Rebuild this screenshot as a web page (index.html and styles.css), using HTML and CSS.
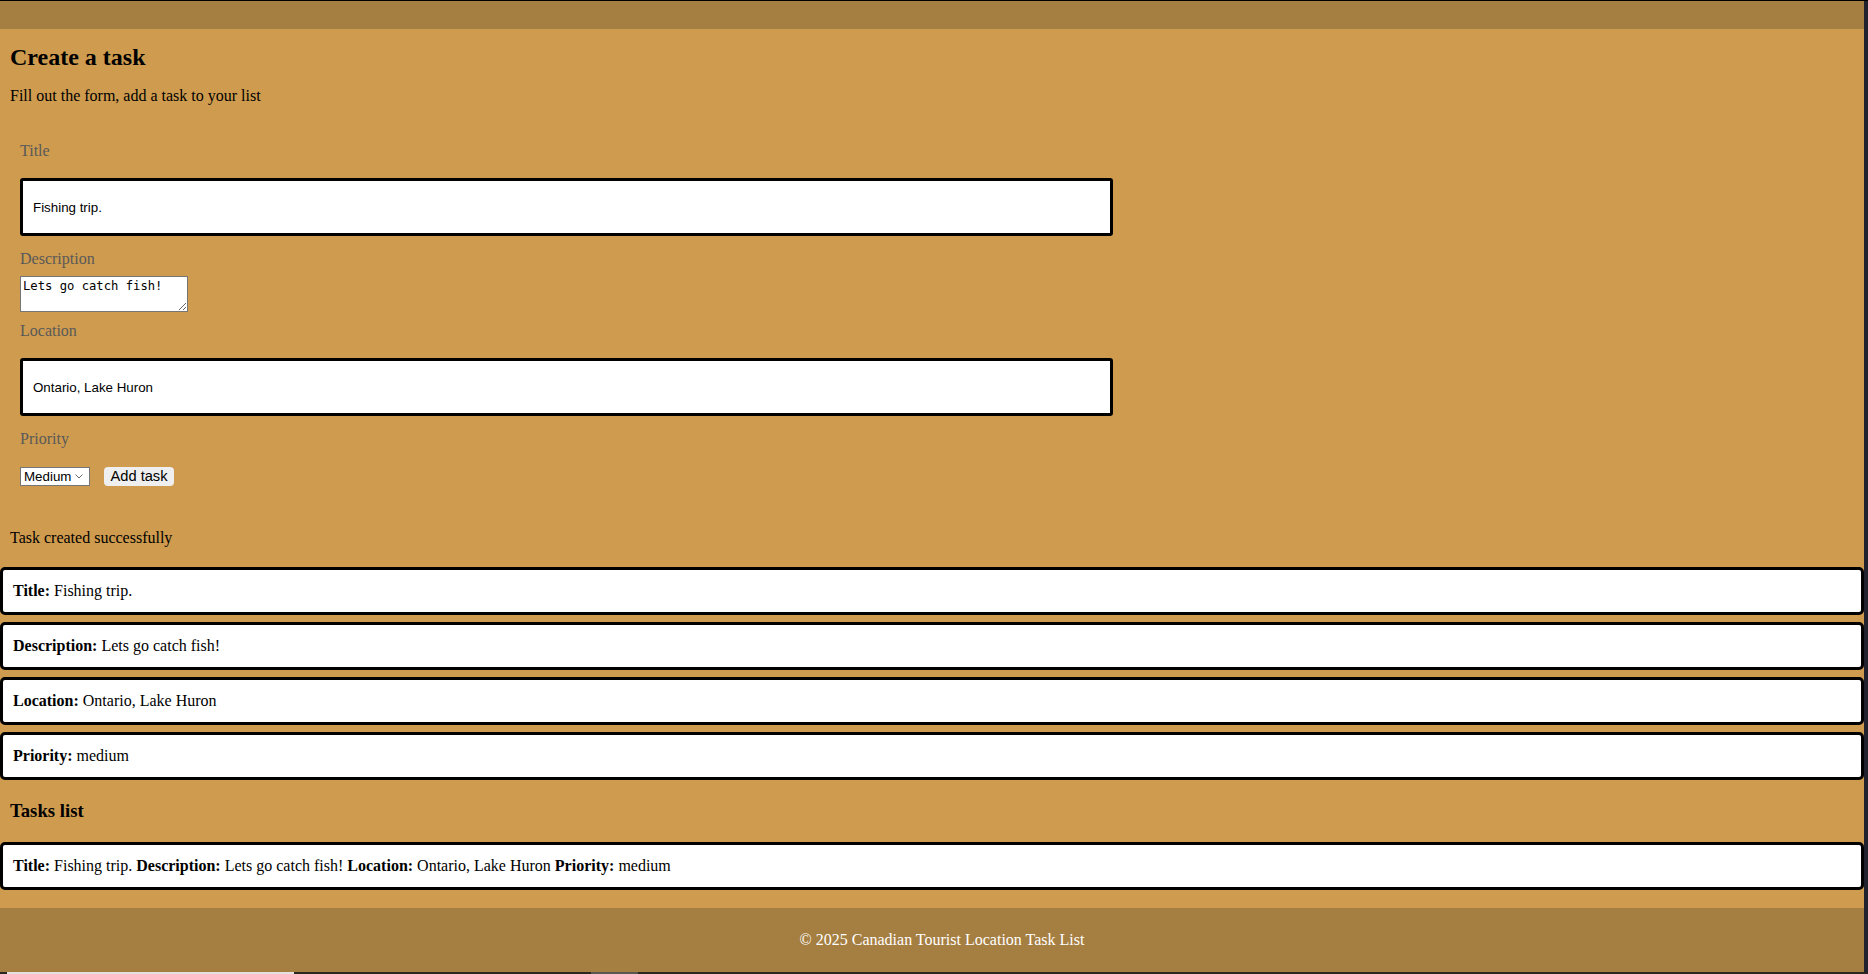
FILE: index.html
```html
<!DOCTYPE html>
<html lang="en">
<head>
<meta charset="utf-8">
<title>Canadian Tourist Location Task List</title>
<link rel="stylesheet" href="styles.css">
</head>
<body>
<div class="window">
  <div class="page">
    <header class="topbar"></header>
    <main class="main">
      <section class="create">
        <h2 class="create-title">Create a task</h2>
        <p class="intro">Fill out the form, add a task to your list</p>
        <form class="task-form">
          <label class="field-label" for="title">Title</label>
          <input class="text-input input-title" id="title" type="text" value="Fishing trip.">
          <label class="field-label label-desc" for="description">Description</label>
          <textarea class="desc-input" id="description">Lets go catch fish!</textarea>
          <label class="field-label label-loc" for="location">Location</label>
          <input class="text-input input-loc" id="location" type="text" value="Ontario, Lake Huron">
          <label class="field-label label-prio" for="priority">Priority</label>
          <div class="actions">
            <span class="select-wrap">
              <select class="prio-select" id="priority"><option>Medium</option><option>Low</option><option>High</option></select>
              <svg class="chevron" width="8" height="5" viewBox="0 0 8 5" aria-hidden="true"><path d="M0.5 0.5 L4 4 L7.5 0.5" fill="none" stroke="#6b6b6b" stroke-width="1"/></svg>
            </span>
            <button class="add-btn" type="button">Add task</button>
          </div>
        </form>
        <p class="status">Task created successfully</p>
      </section>
      <section class="details">
        <div class="box"><b>Title:</b> Fishing trip.</div>
        <div class="box"><b>Description:</b> Lets go catch fish!</div>
        <div class="box"><b>Location:</b> Ontario, Lake Huron</div>
        <div class="box"><b>Priority:</b> medium</div>
      </section>
      <h3 class="list-title">Tasks list</h3>
      <ul class="task-list">
        <li class="box"><b>Title:</b> Fishing trip. <b>Description:</b> Lets go catch fish! <b>Location:</b> Ontario, Lake Huron <b>Priority:</b> medium</li>
      </ul>
    </main>
    <footer class="footer">© 2025 Canadian Tourist Location Task List</footer>
  </div>
  <div class="frame-right"></div>
</div>
<div class="frame-bottom"><span class="bar-light"></span><span class="bar-gray"></span></div>
</body>
</html>
```

FILE: styles.css
```css
html, body {
  margin: 0;
  padding: 0;
  overflow: hidden;
}

body {
  border-top: 1px solid #000;
  font-family: "Liberation Serif", "Times New Roman", serif;
  font-size: 16px;
  line-height: 18px;
  color: #000;
  background: #cf9b4e;
}

.window {
  display: flex;
}

.page {
  flex: 1;
  display: flex;
  flex-direction: column;
  background: #cf9b4e;
  min-width: 0;
}

.frame-right {
  width: 4px;
  background: #20232e;
}

.frame-bottom {
  height: 2px;
  background: #2a2721;
  display: flex;
  align-items: stretch;
}

.bar-light {
  margin-left: 7px;
  width: 287px;
  background: #e2e2e2;
}

.bar-gray {
  margin-left: 297px;
  width: 47px;
  background: #5a5752;
}

.topbar {
  height: 28px;
  background: #a57e41;
}

.main {
  display: flex;
  flex-direction: column;
}

.create {
  padding: 0 10px;
}

.create-title {
  margin: 14px 0 0;
  font-size: 24px;
  line-height: 28px;
  font-weight: bold;
}

.intro {
  margin: 16px 0 0;
}

.task-form {
  margin-top: 37px;
  padding: 0 10px;
  display: flex;
  flex-direction: column;
  align-items: flex-start;
}

.field-label {
  color: #595959;
}

.label-desc,
.label-prio {
  margin-top: 14px;
}

.label-loc {
  margin-top: 10px;
}

.text-input {
  box-sizing: border-box;
  margin-top: 18px;
  width: 1093px;
  height: 58px;
  padding: 0 10px;
  border: 3px solid #000;
  border-radius: 3px;
  background: #fff;
  font-family: "Liberation Sans", Arial, sans-serif;
  font-size: 13.33px;
  color: #000;
  outline: none;
}

.desc-input {
  box-sizing: border-box;
  margin-top: 8px;
  width: 168px;
  height: 36px;
  padding: 2px;
  border: 1px solid #767676;
  background: #fff;
  font-family: "DejaVu Sans Mono", monospace;
  font-size: 12.2px;
  line-height: 15px;
  color: #000;
}

.actions {
  margin-top: 19px;
  display: flex;
  align-items: center;
  gap: 14px;
}

.select-wrap {
  position: relative;
  display: flex;
}

.prio-select {
  box-sizing: border-box;
  width: 70px;
  height: 19px;
  padding: 0 0 0 3px;
  border: 1px solid #767676;
  border-radius: 0;
  background: #fff;
  appearance: none;
  -webkit-appearance: none;
  font-family: "Liberation Sans", Arial, sans-serif;
  font-size: 13.33px;
  color: #000;
}

.chevron {
  position: absolute;
  right: 7px;
  top: 7px;
  pointer-events: none;
}

.add-btn {
  box-sizing: border-box;
  height: 19px;
  padding: 0 6.5px;
  border: none;
  border-radius: 4px;
  background: #efefef;
  font-family: "Liberation Sans", Arial, sans-serif;
  font-size: 14.67px;
  line-height: 17px;
  color: #000;
}

.status {
  margin: 43px 0 0;
}

.details {
  margin-top: 20px;
  display: flex;
  flex-direction: column;
  gap: 7px;
}

.box {
  box-sizing: border-box;
  height: 48px;
  padding: 12px 10px;
  border: 3px solid #000;
  border-radius: 5px;
  background: #fff;
  white-space: nowrap;
}

.list-title {
  margin: 20px 0;
  padding: 0 10px;
  font-size: 18.72px;
  line-height: 22px;
  font-weight: bold;
}

.task-list {
  list-style: none;
  margin: 0 0 18px;
  padding: 0;
}

.footer {
  padding: 23px 0 23px 20px;
  background: #a57e41;
  color: #fff;
  text-align: center;
}
```
